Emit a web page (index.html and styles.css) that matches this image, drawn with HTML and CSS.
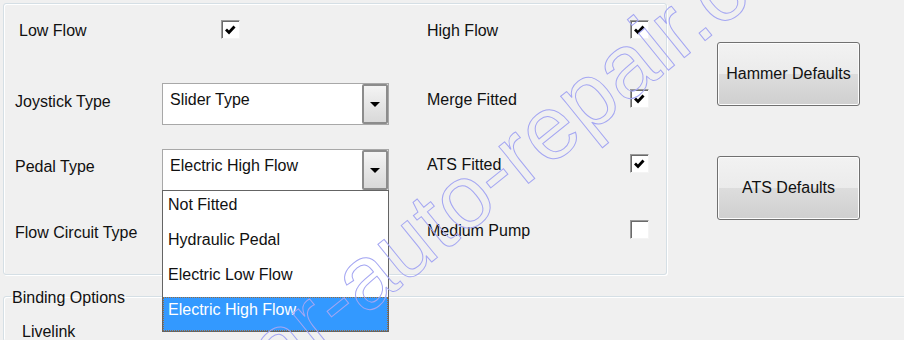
FILE: index.html
```html
<!DOCTYPE html>
<html lang="en">
<head>
  <meta charset="UTF-8">
  <meta name="viewport" content="width=device-width, initial-scale=1.0">
  <title>Joystick Options</title>
  <link rel="stylesheet" href="styles.css">
</head>
<body>
  <div class="page">
    <div class="top">
      <div class="group options-group">
        <div class="col left-col">
          <div class="row row1">
            <span class="lbl lbl-low">Low Flow</span>
            <div class="field">
              <span class="check low-check"><svg viewBox="0 0 17 17"><path d="M4 8.5 L7 11.5 L12.5 5.5"/></svg></span>
            </div>
          </div>
          <div class="row row2">
            <span class="lbl">Joystick Type</span>
            <div class="combo">
              <span class="combo-text">Slider Type</span>
              <span class="combo-btn"><span class="arrow"></span></span>
            </div>
          </div>
          <div class="row row3">
            <span class="lbl">Pedal Type</span>
            <div class="combo">
              <span class="combo-text">Electric High Flow</span>
              <span class="combo-btn"><span class="arrow"></span></span>
              <ul class="dropdown">
                <li>Not Fitted</li>
                <li>Hydraulic Pedal</li>
                <li>Electric Low Flow</li>
                <li class="selected">Electric High Flow</li>
              </ul>
            </div>
          </div>
          <div class="row row4">
            <span class="lbl">Flow Circuit Type</span>
          </div>
        </div>

        <div class="col right-col">
          <div class="rrow rrow1">
            <span class="rlbl">High Flow</span>
            <span class="check"><svg viewBox="0 0 17 17"><path d="M4 8.5 L7 11.5 L12.5 5.5"/></svg></span>
          </div>
          <div class="rrow rrow2">
            <span class="rlbl">Merge Fitted</span>
            <span class="check"><svg viewBox="0 0 17 17"><path d="M4 8.5 L7 11.5 L12.5 5.5"/></svg></span>
          </div>
          <div class="rrow rrow3">
            <span class="rlbl">ATS Fitted</span>
            <span class="check"><svg viewBox="0 0 17 17"><path d="M4 8.5 L7 11.5 L12.5 5.5"/></svg></span>
          </div>
          <div class="rrow rrow4">
            <span class="rlbl">Medium Pump</span>
            <span class="check"></span>
          </div>
        </div>
      </div>

      <div class="side">
        <button class="btn">Hammer Defaults</button>
        <button class="btn">ATS Defaults</button>
      </div>
    </div>

    <fieldset class="binding">
      <legend>Binding Options</legend>
      <div class="livelink">Livelink</div>
    </fieldset>

    <div class="watermark">car-auto-repair.com</div>
  </div>
</body>
</html>
```

FILE: styles.css
```css
body {
  margin: 0;
  background: #f0f0f0;
  font-family: "Liberation Sans", Arial, sans-serif;
  font-size: 16px;
  color: #111;
}
.page {
  position: relative;
  width: 904px;
  height: 340px;
  overflow: hidden;
}
.top {
  display: flex;
  padding: 3px 0 0 3px;
}
.group {
  border: 1px solid #d5dfe5;
  border-radius: 3px;
  box-shadow: inset 1px 1px 0 #fff, 1px 1px 0 #fff;
}
.options-group {
  display: flex;
  width: 662px;
  height: 270px;
}
.left-col {
  width: 374px;
  padding: 6px 0 0 11px;
}
.row {
  display: flex;
  align-items: center;
  height: 42px;
}
.row2 { margin-top: 31px; }
.row3 { margin-top: 24px; }
.row4 { margin-top: 21px; }
.lbl {
  width: 147px;
  flex-shrink: 0;
}
.lbl-low {
  margin-left: 4px;
  width: 143px;
}
.row2 .lbl { margin-bottom: 4px; }
.row3 .lbl { margin-bottom: 6px; }
.field {
  width: 227px;
}
.low-check {
  margin-left: 59px;
  margin-bottom: 4px;
}
.check {
  display: flex;
  box-sizing: border-box;
  width: 19px;
  height: 19px;
  background: #fff;
  border: 1px solid;
  border-color: #9a9a9a #f4f4f4 #f4f4f4 #9a9a9a;
  box-shadow: inset 1px 1px 0 #6a6a6a;
}
.check svg {
  width: 17px;
  height: 17px;
}
.check path {
  fill: none;
  stroke: #000;
  stroke-width: 2.8;
}
.combo {
  position: relative;
  display: flex;
  justify-content: space-between;
  box-sizing: border-box;
  width: 227px;
  height: 42px;
  background: #fff;
  border: 1px solid #a8a8a8;
}
.combo-text {
  padding: 6px 0 0 7px;
  line-height: 20px;
}
.combo-btn {
  display: flex;
  align-items: center;
  justify-content: center;
  box-sizing: border-box;
  width: 26px;
  border: 2px solid #8c8c8c;
  border-radius: 2px;
  background: linear-gradient(#f4f4f4, #e6e6e6 50%, #d9d9d9);
}
.arrow {
  width: 0;
  height: 0;
  border-left: 5px solid transparent;
  border-right: 5px solid transparent;
  border-top: 5px solid #000;
}
.dropdown {
  position: absolute;
  top: 100%;
  left: -1px;
  z-index: 5;
  width: 227px;
  margin: 0;
  padding: 0;
  list-style: none;
  box-sizing: border-box;
  background: #fff;
  border: 1px solid #646464;
}
.dropdown li {
  height: 35px;
  box-sizing: border-box;
  padding: 4px 0 0 5px;
  line-height: 20px;
}
.dropdown .selected {
  height: 34px;
  margin-top: 1px;
  padding: 2px 0 0 4px;
  background: #3399ff;
  color: #fff;
  border: 1px dotted #9a6a3a;
}
.right-col {
  width: 222px;
  padding: 15px 0 0 38px;
}
.rrow {
  display: flex;
  align-items: center;
  height: 24px;
}
.rrow2 { margin-top: 45px; }
.rrow3 { margin-top: 41px; }
.rrow4 { margin-top: 42px; }
.rlbl {
  width: 203px;
}
.rrow .check {
  margin-bottom: 4px;
}
.side {
  display: flex;
  flex-direction: column;
  gap: 50px;
  margin: 39px 0 0 50px;
}
.btn {
  width: 143px;
  height: 64px;
  padding: 0;
  font-family: inherit;
  font-size: 16px;
  color: #111;
  border: 1px solid #707070;
  border-radius: 3px;
  background: linear-gradient(#f2f2f2, #ebebeb 50%, #dddddd 50%, #cfcfcf);
  box-shadow: inset 0 0 0 1px #fcfcfc;
}
.binding {
  width: 1000px;
  margin: 10px 0 0 3px;
  padding: 0 0 0 7px;
  border: 1px solid #d5dfe5;
  border-radius: 3px;
  box-shadow: inset 1px 1px 0 #fff, 1px 1px 0 #fff;
}
.binding legend {
  padding: 4px 1px 0;
  line-height: 18px;
}
.livelink {
  margin-top: 16px;
  padding-left: 11px;
}
/* watermark stamped over the screenshot */
.watermark {
  position: absolute;
  left: 244px;
  top: 338px;
  transform-origin: 0 76px;
  transform: rotate(-39deg);
  font-size: 90px;
  line-height: 1;
  white-space: nowrap;
  color: transparent;
  -webkit-text-stroke: 1px #a4a6f2;
  pointer-events: none;
  z-index: 10;
}
```
